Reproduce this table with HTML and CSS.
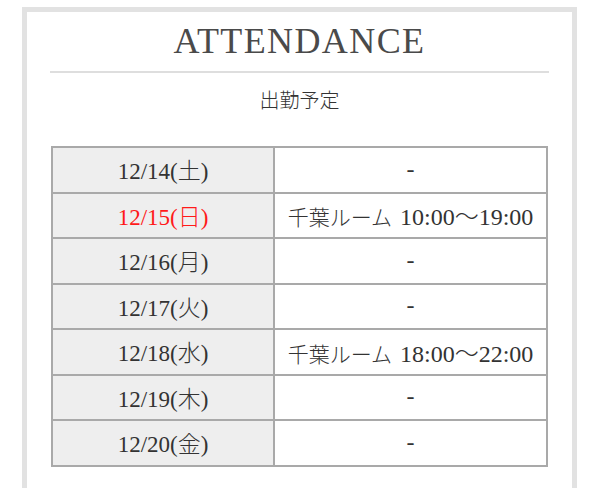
FILE: index.html
```html
<!DOCTYPE html>
<html lang="ja">
<head>
<meta charset="utf-8">
<link rel="stylesheet" href="styles.css">
</head>
<body>
<section class="card">
  <h2 class="title">Attendance</h2>
  <hr class="rule">
  <p class="subtitle">出勤予定</p>
  <table class="schedule">
    <tr><th>12/14(土)</th><td>-</td></tr>
    <tr><th class="sun">12/15(日)</th><td><span class="jp">千葉ルーム</span> 10:00〜19:00</td></tr>
    <tr><th>12/16(月)</th><td>-</td></tr>
    <tr><th>12/17(火)</th><td>-</td></tr>
    <tr><th>12/18(水)</th><td><span class="jp">千葉ルーム</span> 18:00〜22:00</td></tr>
    <tr><th>12/19(木)</th><td>-</td></tr>
    <tr><th>12/20(金)</th><td>-</td></tr>
  </table>
</section>
</body>
</html>
```

FILE: styles.css
```css
html, body {
  margin: 0;
  padding: 0;
  background: #ffffff;
}

body {
  font-family: "Liberation Serif", "Noto Sans CJK JP", serif;
  color: #333333;
}

.card {
  margin: 7px 0 0 22px;
  width: 555px;
  height: 481px;
  box-sizing: border-box;
  border: 5px solid #e2e2e2;
  border-bottom: 0;
  padding: 7px 23px 0 23px;
}

.title {
  margin: 0;
  font-family: "Liberation Serif", serif;
  font-weight: normal;
  font-size: 36px;
  line-height: 44px;
  letter-spacing: 1.4px;
  text-transform: uppercase;
  text-align: center;
  color: #4a4a4a;
}

.rule {
  margin: 8px 0 0 0;
  border: 0;
  height: 2px;
  background: #dedede;
}

.subtitle {
  margin: 13px 0 0 0;
  font-family: "Noto Sans CJK JP", sans-serif;
  font-weight: 300;
  font-size: 20px;
  line-height: 28px;
  text-align: center;
  color: #333333;
}

.schedule {
  margin: 32px 0 0 1px;
  width: 497px;
  border-collapse: collapse;
  font-size: 23px;
  font-weight: 300;
}

.schedule th,
.schedule td {
  border: 2px solid #a9a9a9;
  height: 42px;
  padding: 0 0 1.5px 0;
  text-align: center;
  font-weight: 300;
  color: #333333;
}

.schedule td {
  font-size: 24px;
}

.schedule th {
  width: 220px;
  background: #eeeeee;
}

.schedule th.sun {
  color: #ff1a1a;
}

.jp {
  font-size: 21px;
  margin-right: 2px;
}
```
